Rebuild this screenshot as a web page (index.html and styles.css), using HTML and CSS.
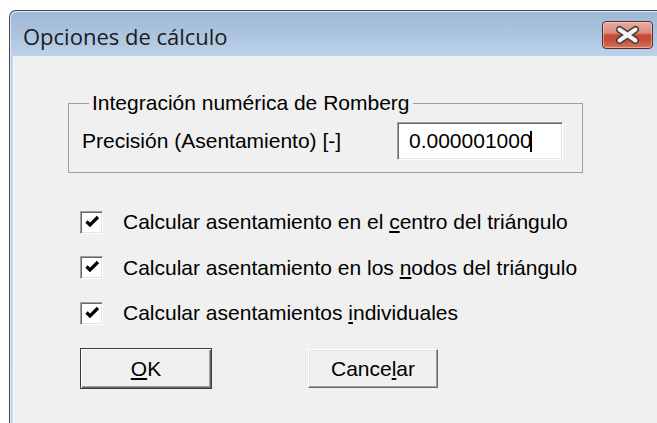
FILE: index.html
```html
<!DOCTYPE html>
<html lang="es">
<head>
<meta charset="utf-8">
<title>Opciones de cálculo</title>
<link rel="stylesheet" href="styles.css">
</head>
<body>
<div class="window">
  <div class="titlebar">
    <span class="title">Opciones de cálculo</span>
    <button class="close" aria-label="Cerrar">
      <svg width="49" height="26" viewBox="0 0 49 26">
        <path d="M16.5 7.5 L32.5 18.5 M32.5 7.5 L16.5 18.5" stroke="#4d3a3e" stroke-width="7" stroke-linecap="round"/>
        <path d="M16.5 7.5 L32.5 18.5 M32.5 7.5 L16.5 18.5" stroke="#f4f4f4" stroke-width="4" stroke-linecap="round"/>
      </svg>
    </button>
  </div>
  <div class="client">
    <fieldset class="group">
      <legend>Integración numérica de Romberg</legend>
      <div class="field-row">
        <span class="field-label">Precisión (Asentamiento) [-]</span>
        <div class="edit">0.000001000<span class="caret"></span></div>
      </div>
    </fieldset>

    <div class="checks">
      <label class="check">
        <span class="box"><svg width="21" height="21" viewBox="0 0 21 21"><polyline points="5.5,9.5 9,13 17,5" fill="none" stroke="#000" stroke-width="3.2"/></svg></span>
        <span>Calcular asentamiento en el <u>c</u>entro del triángulo</span>
      </label>
      <label class="check">
        <span class="box"><svg width="21" height="21" viewBox="0 0 21 21"><polyline points="5.5,9.5 9,13 17,5" fill="none" stroke="#000" stroke-width="3.2"/></svg></span>
        <span>Calcular asentamiento en los <u>n</u>odos del triángulo</span>
      </label>
      <label class="check">
        <span class="box"><svg width="21" height="21" viewBox="0 0 21 21"><polyline points="5.5,9.5 9,13 17,5" fill="none" stroke="#000" stroke-width="3.2"/></svg></span>
        <span>Calcular asentamientos <u>i</u>ndividuales</span>
      </label>
    </div>

    <div class="buttons">
      <button class="btn btn-default"><u>O</u>K</button>
      <button class="btn">Cance<u>l</u>ar</button>
    </div>
  </div>
</div>
</body>
</html>
```

FILE: styles.css
```css
html, body {
  margin: 0;
  padding: 0;
  background: #ffffff;
  overflow: hidden;
  width: 657px;
  height: 423px;
}

body {
  font-family: "Liberation Sans", Arial, sans-serif;
  font-size: 21px;
  color: #000;
}

/* dialog frame, its lower and right edges run off the screen */
.window {
  box-sizing: border-box;
  width: 660px;
  height: 413px;
  margin: 10px 0 0 9px;
  border: 1px solid #3f4857;
  border-bottom: none;
  border-radius: 7px 7px 0 0;
  padding: 0 3px;
  background: linear-gradient(#9db7d4 0px, #aec5df 25px, #bcd2ea 45px, #c2d7ee 100%);
  box-shadow: inset 1px 1px 0 #dfe9f4;
  display: flex;
  flex-direction: column;
}

.titlebar {
  height: 45px;
  box-sizing: border-box;
  padding: 10px 12px 0 10px;
  display: flex;
  align-items: flex-start;
}

.title {
  font-family: "Open Sans", "Noto Sans", sans-serif;
  font-size: 22px;
  line-height: 30px;
  color: #1b1b1b;
}

.close {
  margin-left: auto;
  width: 51px;
  height: 28px;
  padding: 0;
  box-sizing: border-box;
  border: 1px solid #5a2c36;
  border-radius: 4px;
  background: linear-gradient(#e6ad9f 0%, #d9907f 40%, #c6492f 52%, #c9503a 72%, #d6775d 100%);
  box-shadow: inset 0 0 0 1px rgba(255, 235, 230, 0.45);
  display: flex;
  align-items: center;
  justify-content: center;
}

.close svg {
  display: block;
}

/* client area */
.client {
  flex: 1;
  background: #f0f0f0;
  border-top: 1px solid #e4edf7;
  border-left: 1px solid #f7fafd;
}

/* group box */
.group {
  box-sizing: border-box;
  width: 515px;
  min-inline-size: 0;
  margin: 34px 0 0 54px;
  padding: 7px 19px 12px 13px;
  border: 1px solid #a0a0a0;
}

.group legend {
  margin-left: 7px;
  padding: 0 3px;
  line-height: 24px;
}

.field-row {
  display: flex;
  align-items: center;
  justify-content: space-between;
}

.field-label {
  line-height: 24px;
}

.edit {
  box-sizing: border-box;
  width: 166px;
  height: 38px;
  padding: 0 0 0 11px;
  background: #fff;
  border: 1px solid;
  border-color: #a0a0a0 #ffffff #ffffff #a0a0a0;
  box-shadow: inset 1px 1px 0 #696969, inset -1px -1px 0 #e3e3e3;
  display: flex;
  align-items: center;
  line-height: 24px;
}

.caret {
  display: inline-block;
  width: 2px;
  height: 21px;
  margin-left: -2px;
  background: #000;
}

/* check boxes */
.checks {
  margin: 37px 0 0 66px;
  display: flex;
  flex-direction: column;
  gap: 21.5px;
}

.check {
  display: flex;
  align-items: center;
  gap: 20px;
  line-height: 24px;
}

.box {
  box-sizing: border-box;
  width: 23px;
  height: 23px;
  background: #fff;
  border: 1px solid;
  border-color: #a0a0a0 #ffffff #ffffff #a0a0a0;
  box-shadow: inset 1px 1px 0 #696969, inset -1px -1px 0 #e3e3e3;
  display: flex;
  align-items: center;
  justify-content: center;
}

.box svg {
  display: block;
}

u {
  text-underline-offset: 2px;
}

/* push buttons */
.buttons {
  margin: 23px 0 0 66px;
  display: flex;
  align-items: center;
  gap: 96px;
}

.btn {
  box-sizing: border-box;
  width: 130px;
  height: 39px;
  padding: 0;
  font: inherit;
  color: #000;
  background: #f0f0f0;
  border: 1px solid;
  border-color: #ffffff #696969 #696969 #ffffff;
  box-shadow: inset -1px -1px 0 #a0a0a0, inset 1px 1px 0 #e3e3e3;
  line-height: 24px;
}

.btn-default {
  width: 132px;
  height: 41px;
  border: 1px solid #3a3a3a;
  box-shadow: inset 1px 1px 0 #ffffff, inset -1px -1px 0 #696969, inset -2px -2px 0 #a0a0a0;
}
```
